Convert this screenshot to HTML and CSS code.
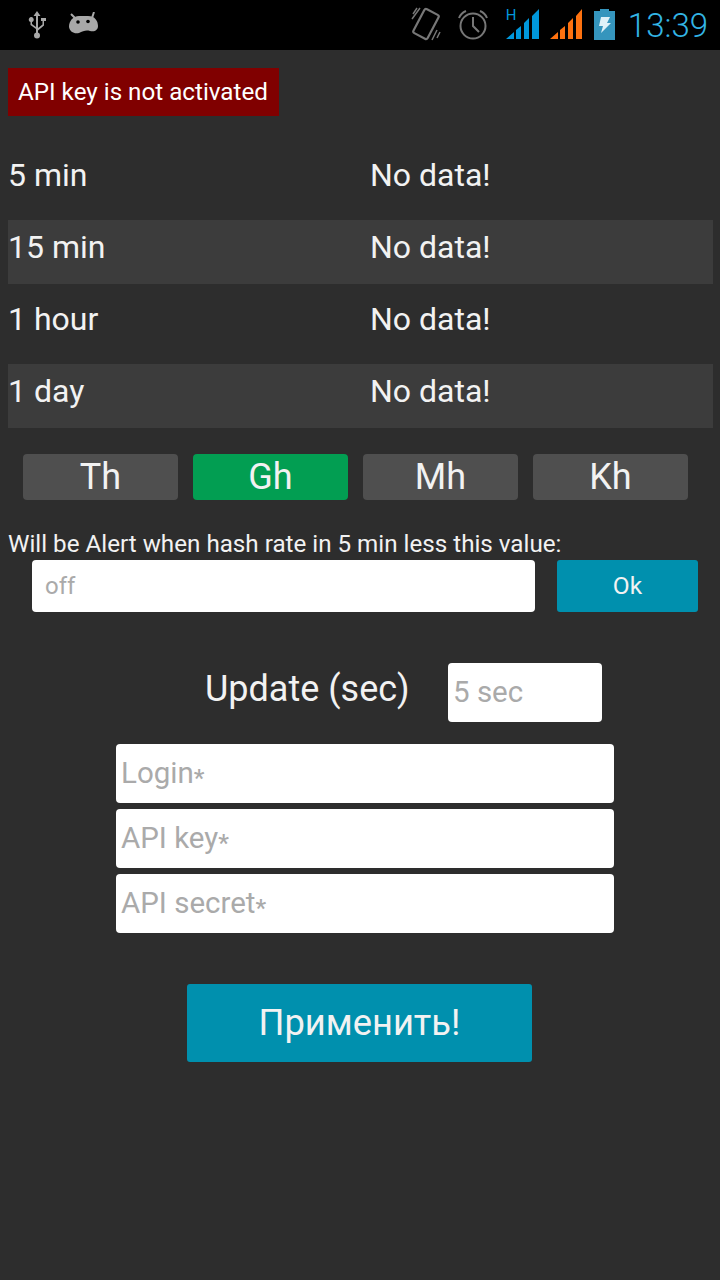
FILE: index.html
```html
<!DOCTYPE html>
<html>
<head>
<meta charset="utf-8">
<link rel="stylesheet" href="styles.css">
</head>
<body>
<div class="status">
  <svg class="ic-usb" width="22" height="28" viewBox="0 0 22 28"><path d="M11 0 L14.500 5 H12 V17 L16.500 13.500 V10 H15 V7 H20 V10 H18 V14.500 L12 19.500 V23 H10 V18 L4.500 14 V11 A2.500 2.500 0 1 1 6 11 V13 L10 16 V5 H7.500 Z" fill="#a8a8a8"/><circle cx="11" cy="24.500" r="3" fill="#a8a8a8"/></svg>
  <svg class="ic-droid" width="30" height="24" viewBox="0 0 30 24"><path d="M2 2 L7 7 M25 0 L23 6" stroke="#a8a8a8" stroke-width="2" fill="none"/><path d="M10 4 H19 C26 4 29 9 29 14 C29 18 26 20 21 19 C17 18 14 19 10 21 C5 22 1 20 0 15 C0 9 4 4 10 4 Z" fill="#a8a8a8"/><circle cx="9" cy="10" r="1.800" fill="#000"/><circle cx="19" cy="9.500" r="1.800" fill="#000"/></svg>
  <div class="spacer"></div>
  <svg class="ic-vib" width="30" height="34" viewBox="0 0 30 34"><rect x="7" y="3.500" width="16" height="27" rx="2" transform="rotate(28 15 17)" fill="none" stroke="#777" stroke-width="2.200"/><path d="M9 1 L1 12 M6 1 L2 7 M26 23 L21 33 M29 25 L26 31" stroke="#777" stroke-width="1.500" fill="none"/></svg>
  <svg class="ic-alarm" width="32" height="30" viewBox="0 0 32 30"><circle cx="16" cy="16" r="12.500" fill="none" stroke="#777" stroke-width="2"/><path d="M16 7 V16 L22 22" fill="none" stroke="#777" stroke-width="2"/><path d="M2 8 Q4 3 9 1 M30 8 Q28 3 23 1" fill="none" stroke="#777" stroke-width="2"/></svg>
  <div class="sig-wrap">
    <span class="h">H</span>
    <svg width="34" height="32" viewBox="0 0 34 32"><path d="M0 31 L8 24 V31 Z M10 22 L15 18 V31 H10 Z M18 15 L23 10 V31 H18 Z M26 8 L33 1 V31 H26 Z" fill="#0097db"/></svg>
  </div>
  <svg class="ic-sig2" width="33" height="32" viewBox="0 0 33 32"><path d="M0 31 L8 24 V31 Z M10 22 L15 18 V31 H10 Z M18 15 L23 10 V31 H18 Z M26 8 L32 1 V31 H26 Z" fill="#fe7210"/></svg>
  <svg class="ic-bat" width="21" height="32" viewBox="0 0 21 32"><path d="M6 1 H15 V3 H21 V32 H0 V3 H6 Z" fill="#3595bd"/><path d="M7 9 H16 L13 15 H17 L7 25 L9 18 H5 Z" fill="#dff1f8"/></svg>
  <span class="clock">13:39</span>
</div>
<div class="content">
  <div class="alert-wrap"><span class="alert">API key is not activated</span></div>
  <div class="rows">
    <div class="row"><span class="lab">5 min</span><span class="val">No data!</span></div>
    <div class="row alt"><span class="lab">15 min</span><span class="val">No data!</span></div>
    <div class="row"><span class="lab">1 hour</span><span class="val">No data!</span></div>
    <div class="row alt"><span class="lab">1 day</span><span class="val">No data!</span></div>
  </div>
  <div class="units">
    <div class="unit">Th</div>
    <div class="unit on">Gh</div>
    <div class="unit">Mh</div>
    <div class="unit">Kh</div>
  </div>
  <div class="note">Will be Alert when hash rate in 5 min less this value:</div>
  <div class="alert-row">
    <div class="input off">off</div>
    <div class="ok">Ok</div>
  </div>
  <div class="update">
    <span class="update-label">Update (sec)</span>
    <div class="field sec">5 sec</div>
  </div>
  <div class="creds">
    <div class="field">Login<span class="star">*</span></div>
    <div class="field">API key<span class="star">*</span></div>
    <div class="field">API secret<span class="star">*</span></div>
  </div>
  <div class="apply-row"><div class="apply">Применить!</div></div>
</div>
</body>
</html>
```
FILE: styles.css
```css
* { box-sizing: border-box; }
html, body { margin: 0; padding: 0; }
body {
  width: 720px;
  height: 1280px;
  background: #2d2d2d;
  font-family: Roboto, sans-serif;
  color: #f2f2f2;
  overflow: hidden;
}
.status {
  height: 50px;
  background: #000;
  display: flex;
  align-items: center;
  padding-left: 26px;
  padding-right: 12px;
}
.ic-droid { margin-left: 21px; margin-top: -2px; }
.spacer { flex: 1; }
.ic-vib { margin-right: 16px; margin-top: -2px; }
.ic-alarm { margin-right: 17px; }
.sig-wrap { position: relative; width: 34px; height: 32px; margin-top: -2px; margin-right: 10px; }
.sig-wrap svg { display: block; }
.h { position: absolute; left: 0; top: -2px; font-size: 15px; line-height: 18px; color: #0097db; }
.ic-sig2 { margin-top: -2px; margin-right: 11px; }
.ic-bat { margin-top: -2px; margin-right: 13px; }
.clock { font-size: 33px; line-height: 50px; color: #33b5e5; font-weight: 300; margin-top: 2px; }
.content { padding: 0 7px 0 8px; }
.alert-wrap { padding-top: 18px; height: 66px; }
.alert {
  display: inline-block;
  height: 48px;
  line-height: 48px;
  padding: 0 11px 0 10px;
  background: #800000;
  color: #fff;
  font-size: 24.2px;
}
.rows { padding-top: 32px; }
.row {
  height: 64px;
  margin-bottom: 8px;
  display: flex;
  font-size: 32px;
  line-height: 54px;
}
.row.alt { background: #3c3c3c; }
.lab { width: 362px; }
.units {
  display: flex;
  gap: 15px;
  padding-left: 15px;
  padding-top: 18px;
}
.unit {
  width: 155px;
  height: 46px;
  line-height: 46px;
  background: #4f4f4f;
  border-radius: 4px;
  text-align: center;
  font-size: 36px;
}
.unit.on { background: #029e52; }
.note {
  font-size: 24.2px;
  line-height: 30px;
  margin-top: 29px;
}
.alert-row {
  display: flex;
  padding-left: 24px;
  gap: 22px;
  margin-top: 1px;
}
.input {
  width: 503px;
  height: 52px;
  background: #fff;
  border-radius: 4px;
  color: #aaa;
  font-size: 24px;
  line-height: 52px;
  padding-left: 13px;
}
.ok {
  width: 141px;
  height: 52px;
  background: #0090ae;
  border-radius: 3px;
  text-align: center;
  line-height: 52px;
  font-size: 24.5px;
}
.update {
  display: flex;
  align-items: center;
  margin-top: 51px;
  padding-left: 197px;
}
.update-label { font-size: 36px; width: 243px; margin-bottom: 8px; }
.field {
  background: #fff;
  border-radius: 4px;
  color: #aaa;
  height: 59px;
  line-height: 59px;
  font-size: 29.5px;
  padding-left: 5px;
}
.star { font-size: 24px; font-weight: 500; vertical-align: -3px; }
.sec { width: 154px; height: 59px; }
.creds {
  display: flex;
  flex-direction: column;
  gap: 6px;
  margin-top: 22px;
  width: 498px;
  margin-left: 108px;
}
.apply-row { padding-left: 179px; margin-top: 51px; }
.apply {
  width: 345px;
  height: 78px;
  line-height: 78px;
  background: #0090ae;
  border-radius: 3px;
  text-align: center;
  font-size: 36.3px;
}
```
